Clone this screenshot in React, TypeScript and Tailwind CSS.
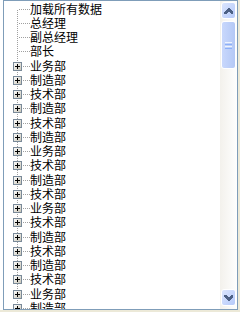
import React from "react";

const rows: { label: string; plus: boolean }[] = [
  { label: "加载所有数据", plus: false },
  { label: "总经理", plus: false },
  { label: "副总经理", plus: false },
  { label: "部长", plus: false },
  ...[
    "业务部", "制造部", "技术部", "制造部", "技术部", "制造部", "业务部", "技术部", "制造部",
    "技术部", "业务部", "技术部", "制造部", "技术部", "制造部", "技术部", "业务部", "制造部",
  ].map((l) => ({ label: l, plus: true })),
];

const PITCH = 14.25;
const rowTop = (i: number) => Math.floor(i * PITCH);
const rowH = (i: number) => rowTop(i + 1) - rowTop(i);

function Dots({ x1, x2, y }: { x1: number; x2: number; y: number }) {
  const out: React.ReactNode[] = [];
  for (let x = x1; x <= x2; x += 2) out.push(<rect key={"h" + x} x={x} y={y} width={1} height={1} fill="#a0a0a0" />);
  return <>{out}</>;
}
function VDots({ x, y1, y2, offset }: { x: number; y1: number; y2: number; offset: number }) {
  const out: React.ReactNode[] = [];
  for (let y = y1; y <= y2; y++) if ((y + offset) % 2 === 0) out.push(<rect key={"v" + y} x={x} y={y} width={1} height={1} fill="#a0a0a0" />);
  return <>{out}</>;
}

function Lines({ plus, first, index, h }: { plus: boolean; first: boolean; index: number; h: number }) {
  const c = 7;
  return (
    <svg width={26} height={h} className="shrink-0" shapeRendering="crispEdges">
      <VDots x={13} y1={first ? c : 0} y2={h - 1} offset={rowTop(index)} />
      {plus ? (
        <>
          <rect x={9} y={c - 4} width={9} height={9} fill="white" />
          <rect x={9.5} y={c - 3.5} width={8} height={8} fill="url(#pg)" stroke="#7a8a99" />
          <rect x={11} y={c} width={5} height={1} fill="#000" />
          <rect x={13} y={c - 2} width={1} height={5} fill="#000" />
          <Dots x1={19} x2={25} y={c} />
        </>
      ) : (
        <Dots x1={15} x2={25} y={c} />
      )}
    </svg>
  );
}

function Arrow({ up }: { up: boolean }) {
  return (
    <svg width={9} height={6} shapeRendering="crispEdges">
      {up ? (
        <path d="M0 4 L4 0 L5 0 L9 4 L9 6 L7 6 L4.5 3.5 L2 6 L0 6 Z" fill="#4d6185" />
      ) : (
        <path d="M0 0 L2 0 L4.5 2.5 L7 0 L9 0 L9 2 L5 6 L4 6 L0 2 Z" fill="#4d6185" />
      )}
    </svg>
  );
}

export default function App() {
  return (
    <div className="w-[240px] h-[312px] bg-[#ece9d8] flex" style={{ fontFamily: '"Noto Sans CJK SC", "Noto Sans", sans-serif' }}>
      <svg width={0} height={0} className="absolute">
        <defs>
          <linearGradient id="pg" x1="0" y1="0" x2="1" y2="1">
            <stop offset="0" stopColor="#ffffff" />
            <stop offset="1" stopColor="#c6c3b5" />
          </linearGradient>
        </defs>
      </svg>
      <div className="w-[3px] h-[310px] bg-white" />
      <div className="w-[235px] h-[310px] border border-[#7f9db9] bg-white flex">
        <div className="flex-1 overflow-hidden pt-[1px]">
          {rows.map((r, i) => {
            const h = rowH(i);
            return (
              <div key={i} className="flex items-start" style={{ height: h }}>
                <Lines plus={r.plus} first={i === 0} index={i} h={h} />
                <span className="text-[12px] leading-[14px] text-black whitespace-nowrap">{r.label}</span>
              </div>
            );
          })}
        </div>
        <div className="w-[17px] flex flex-col bg-gradient-to-r from-[#f3f1ec] to-[#fefefe]">
          <div className="mx-[1px] mt-[1px] h-[17px] rounded-[3px] border border-white bg-gradient-to-br from-[#dbe5fd] to-[#b6cafa] flex items-center justify-center">
            <Arrow up />
          </div>
          <div className="mx-[1px] mt-[2px] h-[48px] rounded-[3px] border border-white bg-gradient-to-r from-[#c9d8fc] to-[#b4c8f6] flex flex-col items-center justify-center gap-[1px]">
            <div className="w-[7px] h-[1px] bg-[#eef4fe]" />
            <div className="w-[7px] h-[1px] bg-[#8cb0f8]" />
            <div className="w-[7px] h-[1px] bg-[#eef4fe]" />
            <div className="w-[7px] h-[1px] bg-[#8cb0f8]" />
          </div>
          <div className="flex-1" />
          <div className="mx-[1px] mb-[3px] h-[17px] rounded-[3px] border border-white bg-gradient-to-br from-[#dbe5fd] to-[#b6cafa] flex items-center justify-center">
            <Arrow up={false} />
          </div>
        </div>
      </div>
    </div>
  );
}
